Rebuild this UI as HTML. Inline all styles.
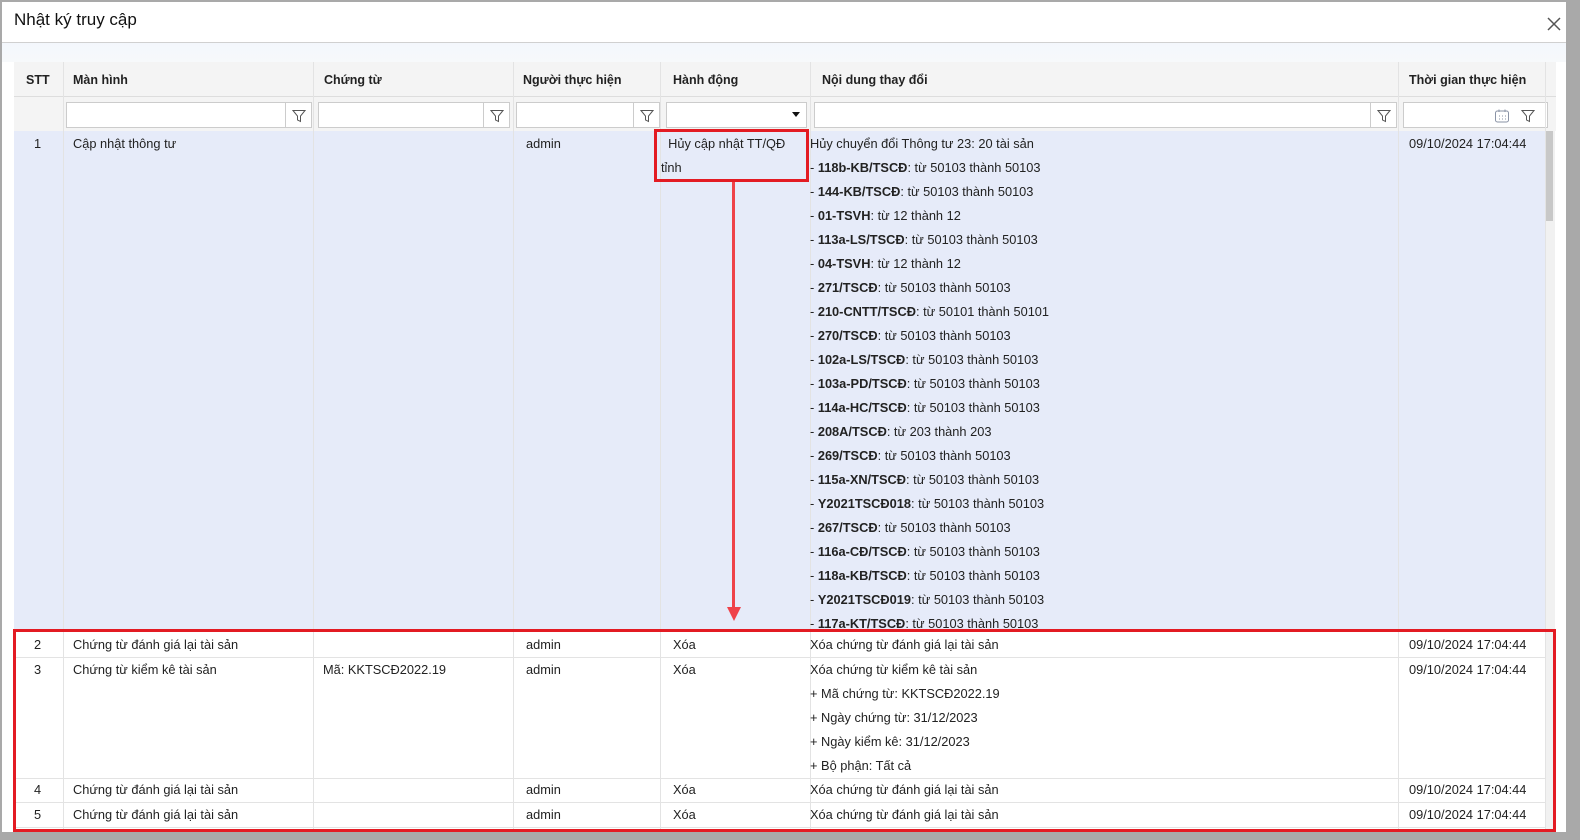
<!DOCTYPE html>
<html><head><meta charset="utf-8">
<style>
*{box-sizing:border-box;margin:0;padding:0}
body{width:1580px;height:840px;background:#a9a9a9;font-family:"Liberation Sans",Arial,sans-serif;font-size:12.8px;color:#222;position:relative;overflow:hidden}
.win{position:absolute;left:2px;top:2px;width:1564px;height:830px;background:#fff;overflow:hidden}
.a{position:absolute;white-space:nowrap}
.title{left:12px;top:8px;font-size:17px;color:#111}
.hdr{position:absolute;left:12px;top:60px;width:1542px;height:35px;background:#f4f4f4;border-bottom:1px solid #ddd}
.hdr div{position:absolute;top:11px;font-weight:bold;font-size:12.5px;color:#222}
.filt{position:absolute;left:12px;top:95px;width:1542px;height:34px;background:#f4f4f4}
.inp{position:absolute;top:5px;height:26px;background:#fff;border:1px solid #ccc}
.fb{position:absolute;right:0;top:0;width:26px;height:24px;border-left:1px solid #ccc}
.vl{position:absolute;width:1px;background:#e3e3e3}
.hl{position:absolute;height:1px;background:#e3e3e3;left:12px;width:1532px}
.t{position:absolute;white-space:nowrap;line-height:24px}
b{font-weight:bold}
</style></head><body>
<div class="win">
 <div class="a title">Nhật ký truy cập</div>
 <svg class="a" style="left:1545px;top:15px" width="14" height="14" viewBox="0 0 14 14"><path d="M1 1L13 13M13 1L1 13" stroke="#555" stroke-width="1.5"/></svg>
 <div class="a" style="left:0;top:40px;width:1564px;height:1px;background:#d0d0d0"></div>
 <div class="a" style="left:0;top:41px;width:1564px;height:19px;background:linear-gradient(#f3f7fc,#f7f9fb)"></div>
 <div class="hdr">
  <div style="left:12px">STT</div><div style="left:59px">Màn hình</div><div style="left:310px">Chứng từ</div>
  <div style="left:509px">Người thực hiện</div><div style="left:659px">Hành động</div><div style="left:808px">Nội dung thay đổi</div>
  <div style="left:1395px">Thời gian thực hiện</div>
 </div>
 <div class="filt">
  <div class="inp" style="left:52px;width:246px"><div class="fb"></div></div>
  <div class="inp" style="left:304px;width:192px"><div class="fb"></div></div>
  <div class="inp" style="left:502px;width:144px"><div class="fb"></div></div>
  <div class="inp" style="left:652px;width:141px"><div class="a" style="right:6px;top:9px;width:0;height:0;border-left:4px solid transparent;border-right:4px solid transparent;border-top:5px solid #111"></div></div>
  <div class="inp" style="left:800px;width:583px"><div class="fb"></div></div>
  <div class="inp" style="left:1389px;width:145px"></div>
 </div>
 <svg class="a" style="left:290px;top:107px" width="14" height="14" viewBox="0 0 14 14"><path d="M1 1.5H13L8.5 7V12.5L5.5 11V7Z" fill="none" stroke="#555"/></svg>
 <svg class="a" style="left:488px;top:107px" width="14" height="14" viewBox="0 0 14 14"><path d="M1 1.5H13L8.5 7V12.5L5.5 11V7Z" fill="none" stroke="#555"/></svg>
 <svg class="a" style="left:638px;top:107px" width="14" height="14" viewBox="0 0 14 14"><path d="M1 1.5H13L8.5 7V12.5L5.5 11V7Z" fill="none" stroke="#555"/></svg>
 <svg class="a" style="left:1375px;top:107px" width="14" height="14" viewBox="0 0 14 14"><path d="M1 1.5H13L8.5 7V12.5L5.5 11V7Z" fill="none" stroke="#555"/></svg>
 <svg class="a" style="left:1519px;top:107px" width="14" height="14" viewBox="0 0 14 14"><path d="M1 1.5H13L8.5 7V12.5L5.5 11V7Z" fill="none" stroke="#555"/></svg>
 <svg class="a" style="left:1492px;top:106px" width="16" height="16" viewBox="0 0 16 16"><rect x="1.5" y="3" width="13" height="11" rx="2" fill="none" stroke="#8a93a6"/><path d="M5 1.5V4M11 1.5V4" stroke="#8a93a6"/><path d="M5 8h1M8 8h1M11 8h1M5 11h1M8 11h1M11 11h1" stroke="#8a93a6"/></svg>

 <div class="a" style="left:12px;top:129px;width:1532px;height:501px;background:#e6ebf9"></div>
 <div class="a" style="left:1544px;top:129px;width:9px;height:700px;background:#f1f1f1"></div>
 <div class="a" style="left:1544px;top:129px;width:7px;height:90px;background:#c8c8c8"></div>
 <div class="vl" style="left:61px;top:60px;height:770px"></div>
 <div class="vl" style="left:311px;top:60px;height:770px"></div>
 <div class="vl" style="left:511px;top:60px;height:770px"></div>
 <div class="vl" style="left:658px;top:60px;height:770px"></div>
 <div class="vl" style="left:808px;top:60px;height:770px"></div>
 <div class="vl" style="left:1396px;top:60px;height:770px"></div>
 <div class="vl" style="left:1543px;top:60px;height:770px"></div>
 <div class="hl" style="top:655px"></div>
 <div class="hl" style="top:776px"></div>
 <div class="hl" style="top:800px"></div>
 <div class="hl" style="top:825px"></div>

 <div class="t" style="left:32px;top:130px">1</div>
 <div class="t" style="left:71px;top:130px">Cập nhật thông tư</div>
 <div class="t" style="left:524px;top:130px">admin</div>
 <div class="t" style="left:659px;top:130px">&nbsp; Hủy cập nhật TT/QĐ<br>tỉnh</div>
 <div class="t" style="left:808px;top:130px">Hủy chuyển đổi Thông tư 23: 20 tài sản<br>
- <b>118b-KB/TSCĐ</b>: từ 50103 thành 50103<br>
- <b>144-KB/TSCĐ</b>: từ 50103 thành 50103<br>
- <b>01-TSVH</b>: từ 12 thành 12<br>
- <b>113a-LS/TSCĐ</b>: từ 50103 thành 50103<br>
- <b>04-TSVH</b>: từ 12 thành 12<br>
- <b>271/TSCĐ</b>: từ 50103 thành 50103<br>
- <b>210-CNTT/TSCĐ</b>: từ 50101 thành 50101<br>
- <b>270/TSCĐ</b>: từ 50103 thành 50103<br>
- <b>102a-LS/TSCĐ</b>: từ 50103 thành 50103<br>
- <b>103a-PD/TSCĐ</b>: từ 50103 thành 50103<br>
- <b>114a-HC/TSCĐ</b>: từ 50103 thành 50103<br>
- <b>208A/TSCĐ</b>: từ 203 thành 203<br>
- <b>269/TSCĐ</b>: từ 50103 thành 50103<br>
- <b>115a-XN/TSCĐ</b>: từ 50103 thành 50103<br>
- <b>Y2021TSCĐ018</b>: từ 50103 thành 50103<br>
- <b>267/TSCĐ</b>: từ 50103 thành 50103<br>
- <b>116a-CĐ/TSCĐ</b>: từ 50103 thành 50103<br>
- <b>118a-KB/TSCĐ</b>: từ 50103 thành 50103<br>
- <b>Y2021TSCĐ019</b>: từ 50103 thành 50103<br>
- <b>117a-KT/TSCĐ</b>: từ 50103 thành 50103</div>
 <div class="t" style="left:1407px;top:130px">09/10/2024 17:04:44</div>

 <div class="t" style="left:32px;top:631px">2</div>
 <div class="t" style="left:71px;top:631px">Chứng từ đánh giá lại tài sản</div>
 <div class="t" style="left:524px;top:631px">admin</div>
 <div class="t" style="left:671px;top:631px">Xóa</div>
 <div class="t" style="left:808px;top:631px">Xóa chứng từ đánh giá lại tài sản</div>
 <div class="t" style="left:1407px;top:631px">09/10/2024 17:04:44</div>
 <div class="t" style="left:32px;top:656px">3</div>
 <div class="t" style="left:71px;top:656px">Chứng từ kiểm kê tài sản</div>
 <div class="t" style="left:321px;top:656px">Mã: KKTSCĐ2022.19</div>
 <div class="t" style="left:524px;top:656px">admin</div>
 <div class="t" style="left:671px;top:656px">Xóa</div>
 <div class="t" style="left:808px;top:656px">Xóa chứng từ kiểm kê tài sản<br>+ Mã chứng từ: KKTSCĐ2022.19<br>+ Ngày chứng từ: 31/12/2023<br>+ Ngày kiểm kê: 31/12/2023<br>+ Bộ phận: Tất cả</div>
 <div class="t" style="left:1407px;top:656px">09/10/2024 17:04:44</div>
 <div class="t" style="left:32px;top:776px">4</div>
 <div class="t" style="left:71px;top:776px">Chứng từ đánh giá lại tài sản</div>
 <div class="t" style="left:524px;top:776px">admin</div>
 <div class="t" style="left:671px;top:776px">Xóa</div>
 <div class="t" style="left:808px;top:776px">Xóa chứng từ đánh giá lại tài sản</div>
 <div class="t" style="left:1407px;top:776px">09/10/2024 17:04:44</div>
 <div class="t" style="left:32px;top:801px">5</div>
 <div class="t" style="left:71px;top:801px">Chứng từ đánh giá lại tài sản</div>
 <div class="t" style="left:524px;top:801px">admin</div>
 <div class="t" style="left:671px;top:801px">Xóa</div>
 <div class="t" style="left:808px;top:801px">Xóa chứng từ đánh giá lại tài sản</div>
 <div class="t" style="left:1407px;top:801px">09/10/2024 17:04:44</div>

 <div class="a" style="left:652px;top:127px;width:155px;height:53px;border:3px solid #e31b23"></div>
 <div class="a" style="left:730px;top:180px;width:3px;height:428px;background:#ef4249"></div>
 <div class="a" style="left:725px;top:605px;width:0;height:0;border-left:7px solid transparent;border-right:7px solid transparent;border-top:14px solid #ef4249"></div>
 <div class="a" style="left:11px;top:627px;width:1543px;height:203px;border:3px solid #e31b23"></div>
</div>
</body></html>
